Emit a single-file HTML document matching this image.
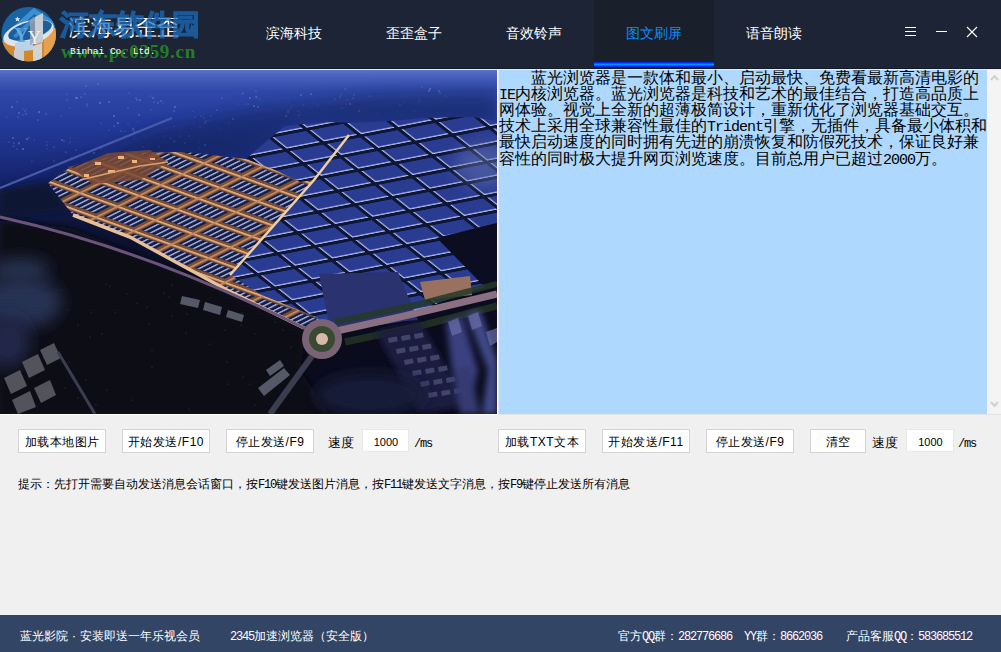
<!DOCTYPE html>
<html><head><meta charset="utf-8">
<style>
*{margin:0;padding:0;box-sizing:border-box}
html,body{width:1001px;height:652px;overflow:hidden;background:#f0f0f0;font-family:"Liberation Sans",sans-serif;position:relative}
.abs{position:absolute}
#hdr{left:0;top:0;width:1001px;height:69px;background:#1c2435}
#hdr .bl{left:0;top:68px;width:1001px;height:1px;background:#141b28}
.tab{top:0;height:68px;width:120px;color:#fff;font-size:14px;text-align:center;line-height:66px}
.tab.act{background:#1a1f2c;color:#0c8cff}
.uline{left:594px;top:62px;width:120px;height:5px;background:linear-gradient(#0010f0,#0090ff 50%,#0010f0)}
#line69{left:0;top:69px;width:1001px;height:1px;background:#e8eef2}
#photo{left:0;top:70px;width:497px;height:344px;overflow:hidden;background:#0a0f25}
#txt{left:498px;top:70px;width:489px;height:344px;background:#aed8fd;border-left:1px solid #e6e6e6}
#txt .tl{position:absolute;font-size:16px;line-height:16px;color:#000;white-space:nowrap;margin-left:0}
#txt .mo{font-family:"Liberation Mono",monospace;font-size:15px;letter-spacing:-1px}
#sb{left:987px;top:70px;width:14px;height:344px;background:#f4f4f4}
.btn{top:429px;height:24px;background:#fff;border:1px solid #d4d4d4;font-size:12px;letter-spacing:0.5px;color:#000;text-align:center;line-height:24px;overflow:hidden}
.lbl{font-size:12px;color:#000}
.inp{top:429px;height:23px;background:#fff;border:1px solid #e8e8e8;font-size:11px;text-align:center;line-height:20px;padding-top:2px;padding-left:1px}
#foot{left:0;top:615px;width:1001px;height:37px;background:#334565;color:#fff;font-size:12px}
#foot span{position:absolute;top:13px;white-space:nowrap;line-height:16px}
.mo{font-family:"Liberation Mono",monospace;font-size:12px;letter-spacing:-1.2px;font-weight:normal}
.dot{display:inline-block;width:12px;text-align:center;font-style:normal}
</style></head>
<body>
<div id="hdr" class="abs">
  <div class="bl abs"></div>
  <svg class="abs" style="left:0;top:5px" width="60" height="60" viewBox="0 5 60 60">
   <defs><clipPath id="lc"><circle cx="28.7" cy="34.2" r="27.3"/></clipPath></defs>
   <g clip-path="url(#lc)">
    <rect x="0" y="0" width="60" height="70" fill="#1b64a4"/>
    <polygon points="0,40 28,48 60,30 60,70 0,70" fill="#d4882e"/>
    <polygon points="44,32 60,26 60,50 44,58" fill="#e6a052"/>
    <polyline points="9,34 34,11 56,26" fill="none" stroke="#3c8fd0" stroke-width="5"/>
    <ellipse cx="28.5" cy="33" rx="26" ry="12" transform="rotate(-16 28.5 33)" fill="#dfe4ea"/>
    <ellipse cx="30" cy="30.5" rx="22.5" ry="8.5" transform="rotate(-16 30 30.5)" fill="#1b5e9c"/>
    <polygon points="13,36 34,16 34,22 16,38" fill="#3c8fd0" opacity="0.9"/>
    <polygon points="15,43 33,40 33,50 15,52" fill="#b9d4ea"/>
    <polygon points="14,50 24,48 24,64 14,64" fill="#c9ccd2"/>
    <polygon points="33,46 42,43 42,62 33,64" fill="#d0d3d8"/>
    <polygon points="35,17 43,13 43,42 35,44" fill="#c8ccd3"/><polygon points="30,20 35,17 35,44 30,45" fill="#9aa4b0" opacity="0.8"/>
    <text x="14" y="42" font-family="Liberation Serif" font-size="20" font-weight="bold" fill="#62aae4">Y</text>
    <text x="28" y="44" font-family="Liberation Serif" font-size="18" fill="#eef2f6">Y</text>
    <polygon points="17.5,16.5 18.3,18.3 20.2,18.4 18.8,19.6 19.3,21.5 17.5,20.4 15.7,21.5 16.2,19.6 14.8,18.4 16.7,18.3" fill="#dde8f2"/>
   </g>
  </svg>
  <div class="abs" style="left:69px;top:13px;font-size:22px;color:#fff;white-space:nowrap;line-height:30px">滨海易歪歪</div>
  <div class="abs" style="left:60px;top:5px;font-family:'Liberation Serif',serif;font-size:28px;font-weight:bold;color:#1a6fc2;-webkit-text-stroke:1.3px #1a6fc2;opacity:0.72;white-space:nowrap;line-height:40px">河东软件园</div>
  <div class="abs" style="left:61px;top:40px;font-family:'Liberation Serif',serif;font-size:19px;font-weight:bold;letter-spacing:0.72px;color:#228022;white-space:nowrap;line-height:24px">www.pc0359.cn</div>
  <div class="abs" style="left:70px;top:46px;font-family:'Liberation Mono',monospace;font-size:9.5px;color:#fff;white-space:nowrap;line-height:12px">Binhai Co. Ltd.</div>
  <div class="abs" style="left:905px;top:27px;width:11px;height:1px;background:#fff;box-shadow:0 4px 0 #fff,0 8px 0 #fff"></div>
  <div class="abs" style="left:936px;top:31px;width:11px;height:1px;background:#fff"></div>
  <svg class="abs" style="left:966px;top:26px" width="12" height="12" viewBox="0 0 12 12"><path d="M1,1 L11,11 M11,1 L1,11" stroke="#fff" stroke-width="1.1"/></svg>
  <div class="tab abs" style="left:234px">滨海科技</div>
  <div class="tab abs" style="left:354px">歪歪盒子</div>
  <div class="tab abs" style="left:474px">音效铃声</div>
  <div class="tab abs act" style="left:594px">图文刷屏</div>
  <div class="tab abs" style="left:714px">语音朗读</div>
  <div class="uline abs"></div>
</div>
<div id="line69" class="abs"></div>
<div id="photo" class="abs"><svg width="497" height="344" viewBox="0 0 497 344" style="position:absolute;left:0;top:0;display:block">
<defs>
<linearGradient id="sky" x1="0" y1="0" x2="0" y2="344" gradientUnits="userSpaceOnUse">
<stop offset="0" stop-color="#5a70c8"/>
<stop offset="0.02" stop-color="#4660bc"/>
<stop offset="0.06" stop-color="#3049a8"/>
<stop offset="0.15" stop-color="#243b9c"/>
<stop offset="0.25" stop-color="#1c2e82"/>
<stop offset="0.35" stop-color="#142062"/>
<stop offset="0.45" stop-color="#0e1438"/>
<stop offset="0.6" stop-color="#0a0c20"/>
<stop offset="1" stop-color="#0a0b1a"/>
</linearGradient>
<linearGradient id="rtfade" x1="0" y1="0" x2="1" y2="0">
<stop offset="0" stop-color="#0e1540" stop-opacity="0"/>
<stop offset="1" stop-color="#0e1540" stop-opacity="0.6"/>
</linearGradient>
<pattern id="roofs" width="38" height="22" patternUnits="userSpaceOnUse" patternTransform="matrix(0.98,-0.19,0.78,0.62,0,0)">
<rect width="38" height="22" fill="#0e1430"/>
<rect x="2" y="2" width="34" height="18" fill="#2c3a92"/>
<rect x="2" y="2" width="1.6" height="18" fill="#a8b4e8"/>
<rect x="2" y="18.4" width="34" height="1.6" fill="#b0bcf0"/>
</pattern>
<pattern id="lit" width="40" height="24" patternUnits="userSpaceOnUse" patternTransform="matrix(0.94,0.34,-0.9,0.45,0,0)">
<rect width="40" height="24" fill="#7a5038"/>
<rect x="0" y="0" width="40" height="2.5" fill="#e0a878"/>
<rect x="0" y="0" width="2.5" height="24" fill="#c08860"/>
<rect x="4.5" y="4.5" width="32" height="16" fill="#161c40"/>
<rect x="7" y="5" width="2.2" height="15" fill="#98a6d8"/>
<rect x="13" y="5" width="2.2" height="15" fill="#98a6d8"/>
<rect x="19" y="5" width="2.2" height="15" fill="#98a6d8"/>
<rect x="25" y="5" width="2.2" height="15" fill="#98a6d8"/>
<rect x="31" y="5" width="2.2" height="15" fill="#98a6d8"/>
</pattern>
<pattern id="dots" width="23" height="17" patternUnits="userSpaceOnUse">
<circle cx="3" cy="4" r="0.8" fill="#a8b8ff" opacity="0.5"/>
<circle cx="14" cy="11" r="0.7" fill="#c0c8ff" opacity="0.45"/>
<circle cx="19" cy="2" r="0.6" fill="#a0b0f0" opacity="0.4"/>
<circle cx="8" cy="14" r="0.6" fill="#b0c0ff" opacity="0.35"/>
</pattern>
<filter id="b1" x="-10%" y="-10%" width="120%" height="120%"><feGaussianBlur stdDeviation="0.6"/></filter>
<filter id="b3" x="-30%" y="-30%" width="160%" height="160%"><feGaussianBlur stdDeviation="3"/></filter>
<filter id="b8" x="-50%" y="-50%" width="200%" height="200%"><feGaussianBlur stdDeviation="8"/></filter>
</defs>
<rect width="497" height="344" fill="url(#sky)"/>
<!-- darker upper right terrain near city -->
<g fill="#b8c4ff"><circle cx="26" cy="44" r="0.8" opacity="0.35"/><circle cx="46" cy="44" r="0.6" opacity="0.6"/><circle cx="46" cy="43" r="0.5" opacity="0.35"/><circle cx="25" cy="41" r="0.5" opacity="0.6"/><circle cx="7" cy="47" r="0.5" opacity="0.35"/><circle cx="17" cy="32" r="0.5" opacity="0.6"/><circle cx="26" cy="39" r="0.5" opacity="0.35"/><circle cx="23" cy="39" r="0.6" opacity="0.35"/><circle cx="12" cy="37" r="0.8" opacity="0.6"/><circle cx="38" cy="50" r="0.8" opacity="0.35"/><circle cx="18" cy="47" r="0.5" opacity="0.6"/><circle cx="39" cy="42" r="0.8" opacity="0.6"/><circle cx="19" cy="43" r="0.8" opacity="0.5"/><circle cx="23" cy="45" r="0.5" opacity="0.6"/><circle cx="81" cy="27" r="0.6" opacity="0.6"/><circle cx="67" cy="30" r="0.6" opacity="0.5"/><circle cx="76" cy="28" r="0.8" opacity="0.5"/><circle cx="87" cy="36" r="0.6" opacity="0.5"/><circle cx="100" cy="33" r="0.8" opacity="0.6"/><circle cx="86" cy="16" r="0.6" opacity="0.6"/><circle cx="70" cy="38" r="0.6" opacity="0.35"/><circle cx="98" cy="14" r="0.6" opacity="0.6"/><circle cx="77" cy="28" r="0.8" opacity="0.5"/><circle cx="85" cy="24" r="0.6" opacity="0.6"/><circle cx="61" cy="46" r="0.6" opacity="0.35"/><circle cx="67" cy="24" r="0.5" opacity="0.5"/><circle cx="87" cy="34" r="0.6" opacity="0.5"/><circle cx="133" cy="59" r="0.8" opacity="0.5"/><circle cx="139" cy="45" r="0.8" opacity="0.5"/><circle cx="109" cy="32" r="0.8" opacity="0.5"/><circle cx="128" cy="54" r="0.5" opacity="0.35"/><circle cx="121" cy="61" r="0.6" opacity="0.6"/><circle cx="125" cy="61" r="0.5" opacity="0.5"/><circle cx="101" cy="53" r="0.6" opacity="0.35"/><circle cx="114" cy="46" r="0.8" opacity="0.6"/><circle cx="118" cy="53" r="0.8" opacity="0.6"/><circle cx="109" cy="60" r="0.5" opacity="0.5"/><circle cx="117" cy="53" r="0.5" opacity="0.35"/><circle cx="114" cy="56" r="0.8" opacity="0.35"/><circle cx="134" cy="61" r="0.8" opacity="0.35"/><circle cx="138" cy="52" r="0.5" opacity="0.35"/><circle cx="54" cy="77" r="0.6" opacity="0.5"/><circle cx="47" cy="75" r="0.5" opacity="0.5"/><circle cx="76" cy="80" r="0.6" opacity="0.5"/><circle cx="66" cy="82" r="0.6" opacity="0.6"/><circle cx="58" cy="95" r="0.5" opacity="0.6"/><circle cx="94" cy="83" r="0.8" opacity="0.5"/><circle cx="71" cy="88" r="0.5" opacity="0.6"/><circle cx="54" cy="91" r="0.5" opacity="0.6"/><circle cx="70" cy="72" r="0.5" opacity="0.5"/><circle cx="62" cy="70" r="0.8" opacity="0.5"/><circle cx="47" cy="72" r="0.5" opacity="0.35"/><circle cx="70" cy="68" r="0.5" opacity="0.35"/><circle cx="47" cy="79" r="0.5" opacity="0.35"/><circle cx="64" cy="71" r="0.5" opacity="0.6"/><circle cx="140" cy="30" r="0.8" opacity="0.5"/><circle cx="163" cy="33" r="0.5" opacity="0.35"/><circle cx="151" cy="40" r="0.5" opacity="0.5"/><circle cx="129" cy="23" r="0.5" opacity="0.5"/><circle cx="161" cy="31" r="0.8" opacity="0.35"/><circle cx="154" cy="32" r="0.6" opacity="0.6"/><circle cx="150" cy="26" r="0.5" opacity="0.5"/><circle cx="153" cy="28" r="0.8" opacity="0.5"/><circle cx="128" cy="38" r="0.5" opacity="0.6"/><circle cx="174" cy="56" r="0.5" opacity="0.35"/><circle cx="137" cy="30" r="0.8" opacity="0.35"/><circle cx="136" cy="28" r="0.6" opacity="0.6"/><circle cx="158" cy="33" r="0.8" opacity="0.35"/><circle cx="175" cy="37" r="0.8" opacity="0.6"/><circle cx="219" cy="58" r="0.5" opacity="0.5"/><circle cx="209" cy="50" r="0.5" opacity="0.35"/><circle cx="200" cy="57" r="0.5" opacity="0.6"/><circle cx="192" cy="59" r="0.5" opacity="0.35"/><circle cx="211" cy="46" r="0.6" opacity="0.6"/><circle cx="174" cy="41" r="0.6" opacity="0.6"/><circle cx="205" cy="53" r="0.8" opacity="0.35"/><circle cx="217" cy="40" r="0.8" opacity="0.35"/><circle cx="201" cy="46" r="0.5" opacity="0.5"/><circle cx="195" cy="47" r="0.5" opacity="0.5"/><circle cx="193" cy="41" r="0.6" opacity="0.35"/><circle cx="204" cy="48" r="0.5" opacity="0.5"/><circle cx="206" cy="51" r="0.6" opacity="0.6"/><circle cx="229" cy="53" r="0.5" opacity="0.5"/><circle cx="233" cy="49" r="0.8" opacity="0.6"/><circle cx="254" cy="36" r="0.8" opacity="0.6"/><circle cx="256" cy="21" r="0.5" opacity="0.6"/><circle cx="222" cy="28" r="0.6" opacity="0.6"/><circle cx="257" cy="27" r="0.6" opacity="0.35"/><circle cx="238" cy="34" r="0.6" opacity="0.35"/><circle cx="243" cy="23" r="0.5" opacity="0.6"/><circle cx="248" cy="34" r="0.5" opacity="0.6"/><circle cx="242" cy="24" r="0.6" opacity="0.35"/><circle cx="260" cy="29" r="0.5" opacity="0.5"/><circle cx="256" cy="27" r="0.8" opacity="0.35"/><circle cx="258" cy="37" r="0.8" opacity="0.5"/><circle cx="245" cy="34" r="0.6" opacity="0.35"/><circle cx="250" cy="28" r="0.8" opacity="0.5"/><circle cx="298" cy="41" r="0.6" opacity="0.6"/><circle cx="288" cy="33" r="0.5" opacity="0.35"/><circle cx="325" cy="39" r="0.5" opacity="0.35"/><circle cx="300" cy="42" r="0.5" opacity="0.5"/><circle cx="301" cy="25" r="0.8" opacity="0.5"/><circle cx="286" cy="46" r="0.8" opacity="0.6"/><circle cx="288" cy="40" r="0.6" opacity="0.35"/><circle cx="303" cy="35" r="0.5" opacity="0.5"/><circle cx="318" cy="36" r="0.6" opacity="0.35"/><circle cx="292" cy="36" r="0.6" opacity="0.35"/><circle cx="288" cy="42" r="0.8" opacity="0.5"/><circle cx="310" cy="37" r="0.5" opacity="0.35"/><circle cx="290" cy="39" r="0.5" opacity="0.35"/><circle cx="299" cy="45" r="0.6" opacity="0.6"/><circle cx="342" cy="38" r="0.6" opacity="0.5"/><circle cx="341" cy="25" r="0.6" opacity="0.35"/><circle cx="354" cy="25" r="0.5" opacity="0.6"/><circle cx="311" cy="24" r="0.8" opacity="0.5"/><circle cx="350" cy="34" r="0.8" opacity="0.6"/><circle cx="335" cy="29" r="0.6" opacity="0.6"/><circle cx="347" cy="30" r="0.5" opacity="0.5"/><circle cx="359" cy="41" r="0.8" opacity="0.6"/><circle cx="377" cy="44" r="0.5" opacity="0.35"/><circle cx="370" cy="26" r="0.6" opacity="0.5"/><circle cx="353" cy="28" r="0.6" opacity="0.6"/><circle cx="345" cy="19" r="0.5" opacity="0.6"/><circle cx="346" cy="34" r="0.5" opacity="0.5"/><circle cx="340" cy="27" r="0.6" opacity="0.6"/><circle cx="418" cy="32" r="0.6" opacity="0.35"/><circle cx="420" cy="30" r="0.6" opacity="0.35"/><circle cx="404" cy="32" r="0.5" opacity="0.35"/><circle cx="419" cy="30" r="0.6" opacity="0.35"/><circle cx="432" cy="38" r="0.6" opacity="0.35"/><circle cx="414" cy="41" r="0.5" opacity="0.6"/><circle cx="446" cy="26" r="0.5" opacity="0.6"/><circle cx="439" cy="21" r="0.8" opacity="0.5"/><circle cx="422" cy="17" r="0.6" opacity="0.35"/><circle cx="416" cy="41" r="0.5" opacity="0.35"/><circle cx="430" cy="19" r="0.8" opacity="0.6"/><circle cx="400" cy="35" r="0.8" opacity="0.35"/><circle cx="440" cy="23" r="0.8" opacity="0.35"/><circle cx="429" cy="21" r="0.8" opacity="0.6"/><circle cx="199" cy="72" r="0.5" opacity="0.35"/><circle cx="199" cy="78" r="0.5" opacity="0.5"/><circle cx="189" cy="66" r="0.8" opacity="0.35"/><circle cx="165" cy="66" r="0.6" opacity="0.5"/><circle cx="205" cy="75" r="0.8" opacity="0.6"/><circle cx="185" cy="73" r="0.8" opacity="0.35"/><circle cx="180" cy="66" r="0.5" opacity="0.5"/><circle cx="182" cy="88" r="0.5" opacity="0.6"/><circle cx="171" cy="68" r="0.6" opacity="0.35"/><circle cx="159" cy="77" r="0.5" opacity="0.6"/><circle cx="174" cy="71" r="0.8" opacity="0.35"/><circle cx="170" cy="85" r="0.8" opacity="0.5"/><circle cx="175" cy="72" r="0.6" opacity="0.35"/><circle cx="143" cy="77" r="0.5" opacity="0.6"/><circle cx="23" cy="79" r="0.8" opacity="0.6"/><circle cx="17" cy="79" r="0.5" opacity="0.6"/><circle cx="32" cy="91" r="0.6" opacity="0.35"/><circle cx="19" cy="73" r="0.8" opacity="0.5"/><circle cx="34" cy="70" r="0.5" opacity="0.35"/><circle cx="13" cy="68" r="0.8" opacity="0.5"/><circle cx="27" cy="69" r="0.8" opacity="0.6"/><circle cx="19" cy="74" r="0.6" opacity="0.35"/><circle cx="14" cy="73" r="0.6" opacity="0.6"/><circle cx="9" cy="72" r="0.5" opacity="0.5"/><circle cx="13" cy="76" r="0.6" opacity="0.35"/><circle cx="14" cy="76" r="0.6" opacity="0.35"/><circle cx="29" cy="68" r="0.5" opacity="0.6"/><circle cx="97" cy="102" r="0.6" opacity="0.5"/><circle cx="119" cy="95" r="0.6" opacity="0.5"/><circle cx="101" cy="79" r="0.6" opacity="0.35"/><circle cx="120" cy="99" r="0.8" opacity="0.35"/><circle cx="100" cy="101" r="0.8" opacity="0.5"/><circle cx="105" cy="102" r="0.6" opacity="0.35"/><circle cx="108" cy="85" r="0.8" opacity="0.6"/><circle cx="102" cy="98" r="0.8" opacity="0.5"/><circle cx="78" cy="99" r="0.8" opacity="0.5"/><circle cx="69" cy="97" r="0.8" opacity="0.35"/><circle cx="107" cy="102" r="0.6" opacity="0.5"/><circle cx="99" cy="108" r="0.8" opacity="0.5"/><circle cx="91" cy="98" r="0.6" opacity="0.6"/><circle cx="97" cy="91" r="0.8" opacity="0.35"/></g>
<polygon points="0,124 160,58 260,38 380,25 497,22 497,55 300,55 250,85 48,113 0,150" fill="#101a48" opacity="0.45" filter="url(#b8)"/>
<!-- dark band left between road and city -->
<polygon points="0,120 48,112 70,140 0,148" fill="#0e1430" filter="url(#b3)"/>
<!-- forest -->
<polygon points="0,150 70,158 130,182 227,222 306,262 300,300 330,344 0,344" fill="#0c0d14" filter="url(#b3)"/>
<g><circle cx="78" cy="255" r="0.6" fill="#8a7040" opacity="0.5"/><circle cx="255" cy="264" r="0.6" fill="#8a7040" opacity="0.5"/><circle cx="169" cy="227" r="0.6" fill="#8a7040" opacity="0.5"/><circle cx="242" cy="243" r="0.6" fill="#8a7040" opacity="0.5"/><circle cx="102" cy="264" r="0.6" fill="#8a7040" opacity="0.5"/><circle cx="137" cy="233" r="0.6" fill="#8a7040" opacity="0.5"/><circle cx="65" cy="318" r="0.6" fill="#8a7040" opacity="0.5"/><circle cx="152" cy="297" r="0.6" fill="#8a7040" opacity="0.5"/><circle cx="110" cy="216" r="0.6" fill="#8a7040" opacity="0.5"/><circle cx="241" cy="255" r="0.6" fill="#8a7040" opacity="0.5"/><circle cx="198" cy="231" r="0.6" fill="#8a7040" opacity="0.5"/><circle cx="225" cy="260" r="0.6" fill="#8a7040" opacity="0.5"/><circle cx="250" cy="314" r="0.6" fill="#8a7040" opacity="0.5"/><circle cx="82" cy="322" r="0.6" fill="#8a7040" opacity="0.5"/><circle cx="152" cy="280" r="0.6" fill="#8a7040" opacity="0.5"/><circle cx="164" cy="223" r="0.6" fill="#8a7040" opacity="0.5"/><circle cx="255" cy="335" r="0.6" fill="#8a7040" opacity="0.5"/><circle cx="91" cy="242" r="0.6" fill="#8a7040" opacity="0.5"/><circle cx="243" cy="307" r="0.6" fill="#8a7040" opacity="0.5"/><circle cx="292" cy="253" r="0.6" fill="#8a7040" opacity="0.5"/><circle cx="78" cy="328" r="0.6" fill="#8a7040" opacity="0.5"/><circle cx="283" cy="260" r="0.6" fill="#8a7040" opacity="0.5"/><circle cx="172" cy="246" r="0.6" fill="#8a7040" opacity="0.5"/><circle cx="96" cy="335" r="0.6" fill="#8a7040" opacity="0.5"/><circle cx="86" cy="310" r="0.6" fill="#8a7040" opacity="0.5"/><circle cx="228" cy="314" r="0.6" fill="#8a7040" opacity="0.5"/><circle cx="90" cy="267" r="0.6" fill="#8a7040" opacity="0.5"/><circle cx="69" cy="292" r="0.6" fill="#8a7040" opacity="0.5"/><circle cx="291" cy="277" r="0.6" fill="#8a7040" opacity="0.5"/><circle cx="187" cy="244" r="0.6" fill="#8a7040" opacity="0.5"/><circle cx="132" cy="330" r="0.6" fill="#8a7040" opacity="0.5"/><circle cx="106" cy="214" r="0.6" fill="#8a7040" opacity="0.5"/><circle cx="189" cy="339" r="0.6" fill="#8a7040" opacity="0.5"/><circle cx="127" cy="224" r="0.6" fill="#8a7040" opacity="0.5"/><circle cx="186" cy="263" r="0.6" fill="#8a7040" opacity="0.5"/><circle cx="67" cy="240" r="0.6" fill="#8a7040" opacity="0.5"/><circle cx="107" cy="320" r="0.6" fill="#8a7040" opacity="0.5"/><circle cx="115" cy="242" r="0.6" fill="#8a7040" opacity="0.5"/><circle cx="149" cy="254" r="0.6" fill="#8a7040" opacity="0.5"/><circle cx="227" cy="292" r="0.6" fill="#8a7040" opacity="0.5"/><circle cx="147" cy="237" r="0.6" fill="#8a7040" opacity="0.5"/><circle cx="62" cy="220" r="0.6" fill="#8a7040" opacity="0.5"/><circle cx="172" cy="215" r="0.6" fill="#8a7040" opacity="0.5"/><circle cx="210" cy="274" r="0.6" fill="#8a7040" opacity="0.5"/><circle cx="275" cy="252" r="0.6" fill="#8a7040" opacity="0.5"/></g>
<!-- clouds -->
<ellipse cx="22" cy="232" rx="40" ry="26" fill="#283052" filter="url(#b8)"/>
<ellipse cx="8" cy="272" rx="22" ry="26" fill="#20284a" filter="url(#b8)"/>
<ellipse cx="20" cy="200" rx="30" ry="12" fill="#283050" filter="url(#b8)"/>
<!-- bottom-left buildings -->
<g fill="#52525c" filter="url(#b1)">
<polygon points="4,308 20,300 27,316 11,324"/>
<polygon points="22,292 38,284 45,300 29,308"/>
<polygon points="40,280 54,273 61,288 47,295"/>
<polygon points="12,330 30,321 36,337 18,344"/>
<polygon points="34,318 50,310 56,325 41,333"/>
</g>
<path d="M58,282 L95,344" stroke="#3a3e52" stroke-width="3" fill="none"/>
<!-- city blue base -->
<polygon points="48,113 72,96 127,83 185,82 246,89 268,70 285,56 324,52 354,53 391,51 423,48 472,47 497,51 497,153 437,168 485,217 440,232 400,252 330,262 304,258 227,220 130,167 73,145" fill="url(#roofs)" filter="url(#b1)"/>
<!-- haze right top -->
<ellipse cx="485" cy="95" rx="30" ry="22" fill="#6a78b0" opacity="0.45" filter="url(#b8)"/>
<!-- dark forest patch right -->
<polygon points="437,168 497,153 497,217 485,217" fill="#0e1024" filter="url(#b1)"/>
<!-- big dark building -->
<polygon points="319,204 398,202 418,250 330,258" fill="#2a3070" filter="url(#b1)"/>
<polygon points="420,212 470,206 472,225 425,230" fill="#9a7060" filter="url(#b1)"/>
<!-- orange lit region -->
<polygon points="48,113 72,96 127,83 185,82 246,89 275,100 300,112 314,110 270,160 230,205 262,225 318,248 304,258 227,220 130,167 73,145" fill="url(#lit)" filter="url(#b1)"/>
<!-- warm complex -->
<polygon points="72,98 108,83 150,80 168,92 140,110 92,114" fill="#7a4a36" opacity="0.85" filter="url(#b1)"/>
<g fill="#f0b480" filter="url(#b1)">
<rect x="95" y="92" width="6" height="3"/><rect x="118" y="86" width="6" height="3"/><rect x="132" y="90" width="5" height="3"/><rect x="108" y="100" width="7" height="3"/><rect x="84" y="104" width="5" height="3"/><rect x="150" y="88" width="5" height="2"/>
</g>
<path d="M80,110 L140,96 L168,92" stroke="#d8a070" stroke-width="1.5" fill="none" filter="url(#b1)"/>
<!-- lit facades along lower-left edge -->
<path d="M73,145 L130,167 L227,220 L304,258" stroke="#e8c098" stroke-width="3.5" fill="none" filter="url(#b1)"/>
<!-- bright roads -->
<path d="M0,147 Q150,180 312,262" stroke="#6a5478" stroke-width="3" fill="none" filter="url(#b1)"/>
<path d="M349,65 L314,110 L230,205" stroke="#f0d0a0" stroke-width="2.5" fill="none" filter="url(#b1)"/>
<path d="M0,118 L172,48" stroke="#4a5aa8" stroke-width="2" fill="none" filter="url(#b1)"/>
<!-- road to right from roundabout -->
<path d="M332,262 L400,247 L497,224" stroke="#8a7080" stroke-width="7" fill="none" filter="url(#b1)"/>
<path d="M335,252 L420,234 L497,214" stroke="#243a26" stroke-width="6" fill="none" opacity="0.85"/>
<path d="M345,272 L420,256 L497,236" stroke="#243426" stroke-width="7" fill="none" opacity="0.85"/>
<!-- residential compound -->
<polygon points="376,262 420,252 468,335 420,344" fill="#1a1e40" filter="url(#b3)"/>
<g fill="#40446a" filter="url(#b1)"><rect x="388" y="268" width="9" height="5" transform="rotate(-10 388 268)"/><rect x="401" y="266" width="9" height="5" transform="rotate(-10 401 266)"/><rect x="414" y="264" width="9" height="5" transform="rotate(-10 414 264)"/><rect x="396" y="279" width="9" height="5" transform="rotate(-10 396 279)"/><rect x="409" y="277" width="9" height="5" transform="rotate(-10 409 277)"/><rect x="422" y="275" width="9" height="5" transform="rotate(-10 422 275)"/><rect x="404" y="290" width="9" height="5" transform="rotate(-10 404 290)"/><rect x="417" y="288" width="9" height="5" transform="rotate(-10 417 288)"/><rect x="430" y="286" width="9" height="5" transform="rotate(-10 430 286)"/><rect x="412" y="301" width="9" height="5" transform="rotate(-10 412 301)"/><rect x="425" y="299" width="9" height="5" transform="rotate(-10 425 299)"/><rect x="438" y="297" width="9" height="5" transform="rotate(-10 438 297)"/><rect x="420" y="312" width="9" height="5" transform="rotate(-10 420 312)"/><rect x="433" y="310" width="9" height="5" transform="rotate(-10 433 310)"/><rect x="446" y="308" width="9" height="5" transform="rotate(-10 446 308)"/><rect x="428" y="323" width="9" height="5" transform="rotate(-10 428 323)"/><rect x="441" y="321" width="9" height="5" transform="rotate(-10 441 321)"/><rect x="454" y="319" width="9" height="5" transform="rotate(-10 454 319)"/></g>
<!-- towers -->
<g filter="url(#b3)">
<polygon points="446,252 462,246 478,300 470,340 452,300" fill="#3a4080"/>
<polygon points="466,244 480,240 497,290 497,344 482,344 488,300" fill="#404888"/>
<polygon points="452,300 470,296 480,344 460,344" fill="#343a72"/>
</g>
<g fill="#6a6ea8" opacity="0.7" filter="url(#b1)">
<polygon points="448,252 458,248 462,262 452,266"/>
<polygon points="468,246 478,242 482,256 472,260"/>
<polygon points="486,262 497,258 497,272 490,276"/>
</g>
<!-- fog bottom -->
<ellipse cx="370" cy="325" rx="55" ry="22" fill="#161a38" filter="url(#b8)"/>
<!-- roundabout -->
<circle cx="322" cy="269" r="20" fill="#7a6474" filter="url(#b1)"/>
<circle cx="322" cy="269" r="13" fill="#3a4a30"/>
<circle cx="322" cy="269" r="6" fill="#d8b8a8" filter="url(#b1)"/>
<!-- road down from roundabout -->
<path d="M312,286 L270,344" stroke="#3a3c50" stroke-width="6" fill="none"/>
<!-- bottom small buildings along road -->
<g fill="#555866" filter="url(#b1)">
<polygon points="182,226 200,230 198,238 180,234"/>
<polygon points="205,232 222,237 220,245 203,240"/>
<polygon points="228,240 244,245 242,252 226,247"/>
<polygon points="258,318 284,298 290,305 264,326"/><polygon points="266,300 280,290 284,296 270,306"/>
</g>
</svg>
</div>
<div id="txt" class="abs"><div class="tl" style="left:32px;top:0.0px">蓝光浏览器是一款体和最小、启动最快、免费看最新高清电影的</div><div class="tl" style="left:0px;top:16.1px"><span class="mo">IE</span>内核浏览器。蓝光浏览器是科技和艺术的最佳结合，打造高品质上</div><div class="tl" style="left:0px;top:32.2px">网体验。视觉上全新的超薄极简设计，重新优化了浏览器基础交互。</div><div class="tl" style="left:0px;top:48.3px">技术上采用全球兼容性最佳的<span class="mo">Trident</span>引擎，无插件，具备最小体积和</div><div class="tl" style="left:0px;top:64.4px">最快启动速度的同时拥有先进的崩溃恢复和防假死技术，保证良好兼</div><div class="tl" style="left:0px;top:80.5px">容性的同时极大提升网页浏览速度。目前总用户已超过<span class="mo">2000</span>万。</div></div>
<div id="sb" class="abs"><svg class="abs" style="left:3px;top:4px" width="9" height="7" viewBox="0 0 9 7"><path d="M1,6 L4.5,2 L8,6" stroke="#d0d0d0" stroke-width="2" fill="none"/></svg><svg class="abs" style="left:3px;top:331px" width="9" height="7" viewBox="0 0 9 7"><path d="M1,1 L4.5,5 L8,1" stroke="#d0d0d0" stroke-width="2" fill="none"/></svg></div>
<div class="abs" style="left:0;top:414px;width:497px;height:1px;background:#fff"></div>
<div class="abs" style="left:497px;top:70px;width:1px;height:345px;background:#fff"></div>
<div class="abs" style="left:498px;top:414px;width:503px;height:1px;background:#e4e4e4"></div>

<div class="btn abs" style="left:18px;width:88px">加载本地图片</div>
<div class="btn abs" style="left:122px;width:88px">开始发送/F10</div>
<div class="btn abs" style="left:226px;width:88px">停止发送/F9</div>
<div class="lbl abs" style="left:328px;top:434px;font-size:13px">速度</div>
<div class="inp abs" style="left:362px;width:47px">1000</div>
<div class="lbl abs mo" style="left:414px;top:437px">/ms</div>

<div class="btn abs" style="left:498px;width:88px">加载TXT文本</div>
<div class="btn abs" style="left:602px;width:88px">开始发送/F11</div>
<div class="btn abs" style="left:706px;width:88px">停止发送/F9</div>
<div class="btn abs" style="left:810px;width:56px">清空</div>
<div class="lbl abs" style="left:872px;top:434px;font-size:13px">速度</div>
<div class="inp abs" style="left:906px;width:48px">1000</div>
<div class="lbl abs mo" style="left:958px;top:437px">/ms</div>

<div class="lbl abs" style="left:18px;top:476px;white-space:nowrap">提示：先打开需要自动发送消息会话窗口，按<b class="mo">F10</b>键发送图片消息，按<b class="mo">F11</b>键发送文字消息，按<b class="mo">F9</b>键停止发送所有消息</div>

<div id="foot" class="abs">
  <span style="left:20px">蓝光影院<i class="dot">·</i>安装即送一年乐视会员</span>
  <span style="left:230px"><b class="mo">2345</b>加速浏览器（安全版）</span>
  <span style="left:618px">官方<b class="mo">QQ</b>群：<b class="mo">282776686</b></span>
  <span style="left:744px"><b class="mo">YY</b>群：<b class="mo">8662036</b></span>
  <span style="left:846px">产品客服<b class="mo">QQ</b>：<b class="mo">583685512</b></span>
</div>
</body></html>
